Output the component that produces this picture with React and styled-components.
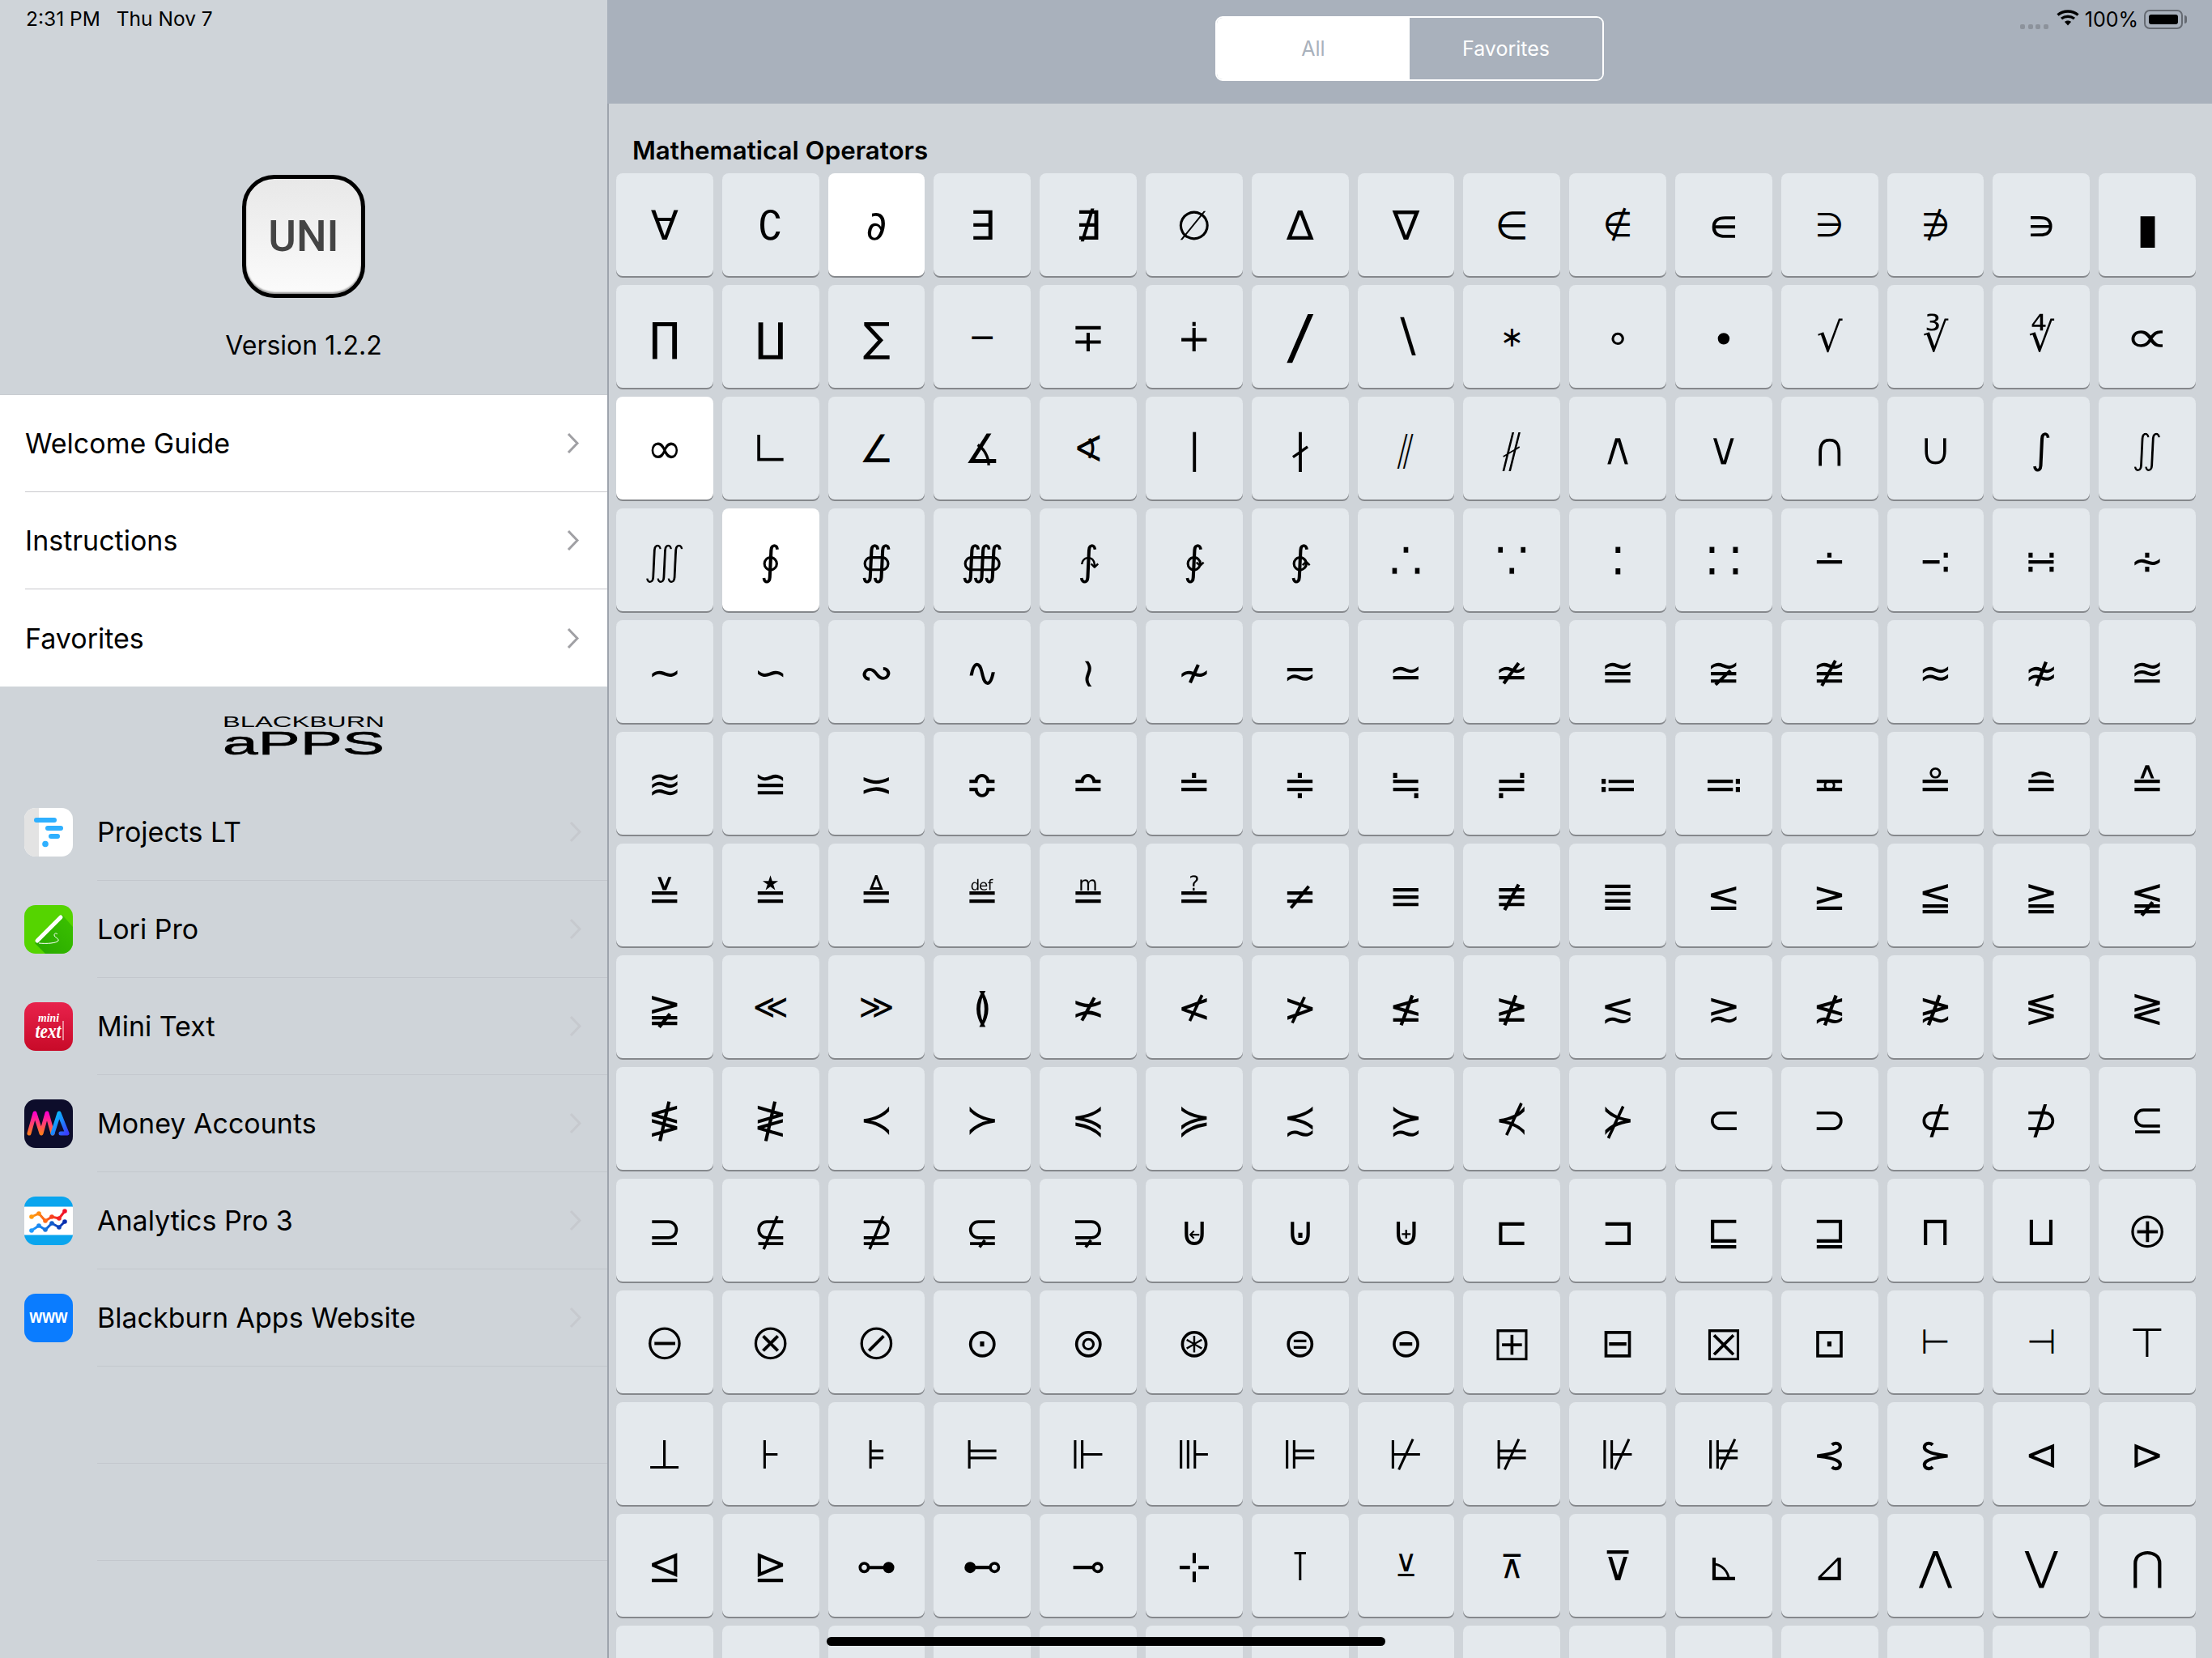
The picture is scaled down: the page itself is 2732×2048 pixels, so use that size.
import React from "react";
import styled, { createGlobalStyle } from "styled-components";

const GlobalStyle = createGlobalStyle`
  html, body {
    margin: 0;
    padding: 0;
    background: #cfd4d9;
  }
  * {
    box-sizing: border-box;
  }
`;

const Screen = styled.div`
  position: relative;
  width: 2732px;
  height: 2048px;
  display: flex;
  overflow: hidden;
  background: #cfd4d9;
  color: #000;
  font-family: Inter, "Liberation Sans", sans-serif;
`;

const Sidebar = styled.aside`
  width: 750px;
  flex: none;
  display: flex;
  flex-direction: column;
`;

const Clock = styled.div`
  height: 46px;
  padding-left: 32px;
  display: flex;
  align-items: center;
  gap: 20px;
  font-size: 24.5px;
`;

const AppInfo = styled.div`
  height: 441px;
  padding-top: 170px;
  display: flex;
  flex-direction: column;
  align-items: center;
`;

const AppLogo = styled.div`
  width: 152px;
  height: 152px;
  border: 5px solid #000;
  border-radius: 40px;
  background: linear-gradient(#e8e8e8, #fbfbfb);
  box-shadow: inset 0 -2px 2px #999;
  display: flex;
  align-items: center;
  justify-content: center;
  font-family: Roboto, "Liberation Sans", sans-serif;
  font-size: 53px;
  font-weight: 500;
  color: #444;
`;

const Version = styled.div`
  margin-top: 39px;
  height: 40px;
  line-height: 40px;
  font-size: 32px;
`;

const MenuList = styled.div`
  background: #fff;
  border-top: 1px solid #c8ccd1;
`;

const MenuRow = styled.div`
  height: 120px;
  margin-left: 31px;
  padding-right: 34px;
  display: flex;
  align-items: center;
  justify-content: space-between;
  font-size: 34px;
  border-bottom: ${(p) => (p.$last ? "none" : "1px solid #c8c8cc")};
`;

const Chevron = styled.svg`
  width: 17px;
  height: 27px;
  fill: none;
  stroke: ${(p) => p.$color};
  stroke-width: 3;
`;

const BrandMark = styled.div`
  height: 120px;
  padding-top: 34px;
  display: flex;
  flex-direction: column;
  align-items: center;
`;

const BrandLine = styled.svg`
  display: block;
  overflow: visible;
`;

const AppRow = styled.div`
  height: 120px;
  padding-left: 30px;
  display: flex;
  align-items: center;
  gap: 30px;
`;

const AppIcon = styled.svg`
  width: 60px;
  height: 60px;
  flex: none;
  border-radius: 14px;
`;

const AppRowBody = styled.div`
  flex: 1;
  height: 100%;
  padding-right: 31px;
  display: flex;
  align-items: center;
  justify-content: space-between;
  font-size: 34px;
  border-bottom: 1px solid #c3c7cd;
`;

const EmptyRow = styled.div`
  height: 120px;
  margin-left: 120px;
  border-bottom: 1px solid #c3c7cd;
`;

const Main = styled.main`
  flex: 1;
  display: flex;
  flex-direction: column;
`;

const TopBar = styled.header`
  height: 128px;
  flex: none;
  padding-top: 20px;
  background: #a9b1bc;
  display: grid;
  grid-template-columns: 1fr 480px 1fr;
  align-items: start;
`;

const Segments = styled.div`
  grid-column: 2;
  height: 80px;
  display: flex;
  overflow: hidden;
  border: 2px solid #fff;
  border-radius: 9px;
`;

const Segment = styled.div`
  flex: 1;
  display: flex;
  align-items: center;
  justify-content: center;
  font-size: 25px;
  background: ${(p) => (p.$active ? "#fff" : "#a9b1bc")};
  color: ${(p) => (p.$active ? "#a9b1bc" : "#fff")};
`;

const StatusIcons = styled.div`
  justify-self: end;
  margin-top: -20px;
  padding: 12px 36px 0 0;
  display: flex;
  align-items: flex-start;
  font-size: 25px;
`;

const SignalDots = styled.div`
  margin: 18px 10px 0 0;
  display: flex;
  gap: 3.5px;
`;

const SignalDot = styled.span`
  width: 6px;
  height: 6px;
  border-radius: 2px;
  background: #8c929b;
`;

const Percent = styled.span`
  height: 24px;
  line-height: 24px;
  margin: 0 7px 0 7px;
`;

const Battery = styled.div`
  position: relative;
  width: 48px;
  height: 24px;
  padding: 4px;
  border: 2px solid #656a72;
  border-radius: 7px;

  &::before {
    content: "";
    display: block;
    height: 100%;
    border-radius: 3px;
    background: #000;
  }

  &::after {
    content: "";
    position: absolute;
    top: 5px;
    right: -7px;
    width: 3px;
    height: 10px;
    border-radius: 0 3px 3px 0;
    background: #656a72;
  }
`;

const Content = styled.section`
  flex: 1;
  min-height: 0;
  padding: 38px 20px 0 9px;
  border-left: 2px solid #9ea4ad;
`;

const SectionTitle = styled.h2`
  margin: 0 0 8px 20px;
  height: 40px;
  line-height: 40px;
  font-size: 31.3px;
  font-weight: 600;
`;

const KeyGrid = styled.div`
  display: grid;
  grid-template-columns: repeat(15, 1fr);
  grid-auto-rows: 127px;
  gap: 11px;
`;

const Key = styled.div`
  padding-top: 2px;
  display: flex;
  align-items: center;
  justify-content: center;
  border-radius: 8px;
  background: ${(p) => (p.$lit ? "#fff" : "#e4e9ed")};
  box-shadow: 0 2px 0 #85888c;
  font-family: "DejaVu Sans", sans-serif;
  line-height: 1;
`;

const Glyph = styled.span`
  display: inline-block;
  font-size: ${(p) => 50 * p.$scale}px;
  transform: ${(p) => p.$shape};
  -webkit-text-stroke: ${(p) => (p.$thin ? "1.2px #e4e9ed" : "0")};
`;

const HomeIndicator = styled.div`
  position: absolute;
  left: 1021px;
  bottom: 15px;
  width: 690px;
  height: 11px;
  border-radius: 6px;
  background: #000;
`;

const menuItems = ["Welcome Guide", "Instructions", "Favorites"];
const litKeys = [2, 30, 46];

// the installed font draws some operators at another size or weight than the picture does
const glyphScale = {
  0x2208: 0.95, 0x2209: 0.85, 0x220a: 1.12, 0x220b: 0.82, 0x220c: 0.82, 0x220d: 1.05, 0x220e: 1.6,
  0x2212: 0.82, 0x2215: 1.5, 0x2216: 1.15, 0x2217: 0.7, 0x221d: 1.1, 0x221e: 1.05,
  0x221f: 1.2, 0x2220: 0.95, 0x2222: 0.9, 0x2225: 0.9, 0x2226: 1, 0x2227: 1.15, 0x2228: 1.15,
  0x2229: 1.2, 0x222a: 1.15, 0x2234: 1.35, 0x2235: 1.35, 0x2236: 1.4, 0x2237: 1.4,
  0x226a: 0.85, 0x226b: 0.85, 0x2295: 1.25, 0x2296: 1.25, 0x2297: 1.25, 0x2298: 1.25,
  0x229e: 1.2, 0x22a0: 1.2, 0x22a2: 0.85, 0x22a3: 0.85, 0x22bb: 0.75, 0x22bc: 0.8,
};
const glyphShape = {
  0x220e: "scaleX(0.65)",
  0x2215: "scaleX(1.4)",
  0x221d: "scaleX(1.4)",
  0x2225: "skewX(-14deg)",
  0x2226: "skewX(-14deg)",
};
const thinGlyphs = [
  0x2215, 0x221f, 0x2225, 0x2226, 0x2227, 0x2228, 0x2229, 0x222a, 0x222c, 0x222d,
  0x2234, 0x2235, 0x2236, 0x2237, 0x2295, 0x2296, 0x2297, 0x2298, 0x229e, 0x22a0,
];

// 14 rows of 15; the last row lies under the bottom edge, only the key tops show
const keys = Array.from({ length: 210 }, (_, i) => 0x2200 + i);

function RowChevron({ color }) {
  return (
    <Chevron viewBox="0 0 17 27" $color={color}>
      <polyline points="3,2 14,13.5 3,25" />
    </Chevron>
  );
}

function BlackburnLogo() {
  return (
    <>
      <BrandLine width="202" height="19" viewBox="0 0 202 19">
        <text x="1" y="16" fontFamily="Liberation Sans" fontSize="19" textLength="200" lengthAdjust="spacingAndGlyphs">
          BLACKBURN
        </text>
      </BrandLine>
      <BrandLine width="202" height="40" viewBox="0 0 202 40">
        <text x="1" y="31" fontFamily="Liberation Sans" fontSize="40" stroke="#000" strokeWidth="0.6" textLength="200" lengthAdjust="spacingAndGlyphs">
          aPPS
        </text>
      </BrandLine>
    </>
  );
}

function ProjectsIcon() {
  return (
    <AppIcon viewBox="0 0 60 60">
      <rect width="60" height="60" fill="#fff" />
      <rect width="18" height="60" fill="#e3e3e3" />
      <rect x="12" y="12" width="28" height="6" rx="3" fill="#2fb0ff" />
      <rect x="26" y="22" width="22" height="6" rx="3" fill="#2fb0ff" />
      <rect x="30" y="32" width="14" height="6" rx="3" fill="#2fb0ff" />
      <circle cx="26" cy="44.5" r="3.8" fill="#2fb0ff" />
    </AppIcon>
  );
}

function LoriIcon() {
  return (
    <AppIcon viewBox="0 0 60 60">
      <defs>
        <linearGradient id="loriShade" x1="0" y1="1" x2="1" y2="0">
          <stop offset="0" stopColor="#27a800" />
          <stop offset="1" stopColor="#3cc200" />
        </linearGradient>
      </defs>
      <rect width="60" height="60" fill="#55d400" />
      <polygon points="47,12 60,27 60,60 26,60 13,47" fill="url(#loriShade)" />
      <line x1="45" y1="15" x2="16" y2="44" stroke="#fff" strokeWidth="5" strokeLinecap="round" />
      <path d="M18 47 C28 48 40 47 42 44 C43 41 37 40 37 37 C37 35 39 34 41 36" fill="none" stroke="#fff" strokeWidth="1" />
    </AppIcon>
  );
}

function MiniTextIcon() {
  return (
    <AppIcon viewBox="0 0 60 60">
      <defs>
        <linearGradient id="miniBg" x1="0" y1="0" x2="0" y2="1">
          <stop offset="0" stopColor="#e8224c" />
          <stop offset="1" stopColor="#c80a28" />
        </linearGradient>
      </defs>
      <rect width="60" height="60" fill="url(#miniBg)" />
      <text x="17" y="24" fill="#fff" fontFamily="Liberation Serif" fontStyle="italic" fontWeight="700" fontSize="15" textLength="26" lengthAdjust="spacingAndGlyphs">
        mini
      </text>
      <text x="13.5" y="44" fill="#fff" fontFamily="Liberation Serif" fontStyle="italic" fontWeight="700" fontSize="25" textLength="32" lengthAdjust="spacingAndGlyphs">
        text
      </text>
      <line x1="48" y1="23" x2="48" y2="47" stroke="#fff" strokeWidth="1" />
    </AppIcon>
  );
}

function MoneyIcon() {
  return (
    <AppIcon viewBox="0 0 60 60">
      <defs>
        <linearGradient id="moneyM" x1="0" y1="0" x2="0" y2="1">
          <stop offset="0" stopColor="#ff00c8" />
          <stop offset="1" stopColor="#ff7a20" />
        </linearGradient>
        <linearGradient id="moneyA" x1="0" y1="0" x2="1" y2="1">
          <stop offset="0" stopColor="#00d0ff" />
          <stop offset="1" stopColor="#3a3dff" />
        </linearGradient>
      </defs>
      <rect width="60" height="60" fill="#0d0d2b" />
      <polyline points="6,42 13,17 21,42 28,17 35,42" fill="none" stroke="url(#moneyM)" strokeWidth="5" strokeLinecap="round" strokeLinejoin="round" />
      <polyline points="35,42 43,17 53,42 45,42" fill="none" stroke="url(#moneyA)" strokeWidth="5" strokeLinecap="round" strokeLinejoin="round" />
    </AppIcon>
  );
}

function AnalyticsIcon() {
  const upper = [[9, 25], [18, 21], [26, 30], [34, 25], [43, 27], [50, 18]];
  const lower = [[9, 42], [18, 36], [26, 41], [34, 33], [43, 38], [50, 31]];
  const line = (pts) => pts.map((p) => p.join(",")).join(" ");
  return (
    <AppIcon viewBox="0 0 60 60">
      <defs>
        <linearGradient id="trendTop" x1="0" y1="0" x2="1" y2="0">
          <stop offset="0" stopColor="#ff9a10" />
          <stop offset="1" stopColor="#f0102a" />
        </linearGradient>
        <linearGradient id="trendLow" x1="0" y1="0" x2="1" y2="0">
          <stop offset="0" stopColor="#1e9bff" />
          <stop offset="1" stopColor="#0a2fae" />
        </linearGradient>
      </defs>
      <rect width="60" height="60" fill="#0aa5ee" />
      <rect y="12" width="60" height="36" fill="#7fcdf5" />
      <rect y="13" width="60" height="34" fill="#fff" />
      <polyline points={line(upper)} fill="none" stroke="url(#trendTop)" strokeWidth="3" />
      <polyline points={line(lower)} fill="none" stroke="url(#trendLow)" strokeWidth="3" />
      {upper.map(([x, y], i) => (
        <circle key={i} cx={x} cy={y} r="2.8" fill={["#ff9a10", "#ff8a10", "#ff6a14", "#f8401c", "#f42024", "#f0102a"][i]} />
      ))}
      {lower.map(([x, y], i) => (
        <circle key={i} cx={x} cy={y} r="2.8" fill={["#1e9bff", "#1a88f0", "#1674dc", "#125cca", "#0e44ba", "#0a2fae"][i]} />
      ))}
    </AppIcon>
  );
}

function WebsiteIcon() {
  return (
    <AppIcon viewBox="0 0 60 60">
      <rect width="60" height="60" fill="#0a7cff" />
      <text transform="translate(30 36) scale(0.84 1)" textAnchor="middle" fill="#fff" fontFamily="Liberation Sans" fontWeight="700" fontSize="24">
        www
      </text>
    </AppIcon>
  );
}

const apps = [
  { name: "Projects LT", icon: ProjectsIcon },
  { name: "Lori Pro", icon: LoriIcon },
  { name: "Mini Text", icon: MiniTextIcon },
  { name: "Money Accounts", icon: MoneyIcon },
  { name: "Analytics Pro 3", icon: AnalyticsIcon },
  { name: "Blackburn Apps Website", icon: WebsiteIcon },
];

function WifiIcon() {
  return (
    <svg width="28" height="20" viewBox="0 0 28 20" fill="none" stroke="#000" strokeWidth="3.4">
      <path d="M1.5 6.5 C8.5 0.5 19.5 0.5 26.5 6.5" />
      <path d="M6 11 C10.5 7.5 17.5 7.5 22 11" />
      <path d="M10 15 L14 19.5 L18 15 C16 13 12 13 10 15 Z" fill="#000" stroke="none" />
    </svg>
  );
}

export default function App() {
  return (
    <Screen>
      <GlobalStyle />
      <Sidebar>
        <Clock>
          <span>2:31 PM</span>
          <span>Thu Nov 7</span>
        </Clock>
        <AppInfo>
          <AppLogo>UNI</AppLogo>
          <Version>Version 1.2.2</Version>
        </AppInfo>
        <MenuList>
          {menuItems.map((item, i) => (
            <MenuRow key={item} $last={i === menuItems.length - 1}>
              {item}
              <RowChevron color="#a0a0a4" />
            </MenuRow>
          ))}
        </MenuList>
        <BrandMark>
          <BlackburnLogo />
        </BrandMark>
        {apps.map(({ name, icon: Icon }) => (
          <AppRow key={name}>
            <Icon />
            <AppRowBody>
              {name}
              <RowChevron color="#c6c9ce" />
            </AppRowBody>
          </AppRow>
        ))}
        <EmptyRow />
        <EmptyRow />
      </Sidebar>
      <Main>
        <TopBar>
          <Segments>
            <Segment $active>All</Segment>
            <Segment>Favorites</Segment>
          </Segments>
          <StatusIcons>
            <SignalDots>
              <SignalDot />
              <SignalDot />
              <SignalDot />
              <SignalDot />
            </SignalDots>
            <WifiIcon />
            <Percent>100%</Percent>
            <Battery />
          </StatusIcons>
        </TopBar>
        <Content>
          <SectionTitle>Mathematical Operators</SectionTitle>
          <KeyGrid>
            {keys.map((code, i) => (
              <Key key={code} $lit={litKeys.includes(i)}>
                {i < 195 && (
                  <Glyph
                    $scale={glyphScale[code] || 1}
                    $shape={glyphShape[code] || "none"}
                    $thin={thinGlyphs.includes(code)}
                  >
                    {String.fromCodePoint(code)}
                  </Glyph>
                )}
              </Key>
            ))}
          </KeyGrid>
        </Content>
      </Main>
      <HomeIndicator />
    </Screen>
  );
}
